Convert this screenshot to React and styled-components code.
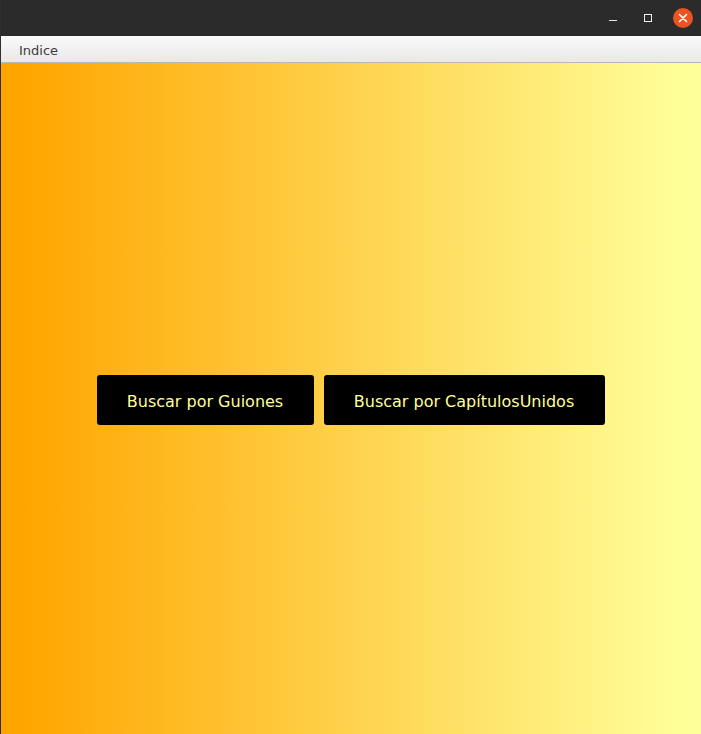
import React from 'react';
import styled, { createGlobalStyle } from 'styled-components';

const GlobalStyle = createGlobalStyle`
  html, body {
    margin: 0;
    padding: 0;
    height: 100%;
    overflow: hidden;
  }
  body {
    font-family: "DejaVu Sans", "Liberation Sans", sans-serif;
  }
  #root {
    height: 100%;
  }
`;

const Window = styled.div`
  width: 700px;
  height: 734px;
  border-left: 1px solid #2f2f2f;
  display: flex;
  flex-direction: column;
`;

const TitleBar = styled.div`
  height: 36px;
  background: #2b2b2b;
  display: flex;
  align-items: center;
  justify-content: flex-end;
  gap: 15px;
  padding-right: 8px;
  flex-shrink: 0;
`;

const WinButton = styled.button`
  width: 20px;
  height: 20px;
  padding: 0;
  border: none;
  background: ${({ $close }) => ($close ? '#e95420' : 'transparent')};
  border-radius: 50%;
  display: flex;
  align-items: center;
  justify-content: center;
`;

const MenuBar = styled.div`
  height: 24px;
  background: linear-gradient(to bottom, #fafafa, #e8e8e8);
  border-bottom: 1px solid #b8b8b8;
  display: flex;
  align-items: center;
  padding-left: 18px;
  padding-top: 2px;
  flex-shrink: 0;
`;

const MenuItem = styled.span`
  font-size: 13px;
  color: #3c3c3c;
`;

const Content = styled.div`
  flex: 1;
  background: linear-gradient(to right, #ffa500 0%, #ffa500 3%, #ffff99 97%, #ffff99 100%);
  display: flex;
  align-items: center;
  justify-content: center;
  gap: 10px;
  padding-top: 3px;
  padding-right: 1px;
`;

const ActionButton = styled.button`
  width: ${({ $w }) => $w}px;
  height: 50px;
  background: #000;
  border: none;
  border-radius: 3px;
  color: #ffff99;
  font-family: "DejaVu Sans", sans-serif;
  font-size: 16px;
  padding: 2px 0 0;
`;

export default function App() {
  return (
    <>
      <GlobalStyle />
      <Window>
        <TitleBar>
          <WinButton aria-label="minimize">
            <svg width="10" height="10" viewBox="0 0 10 10">
              <line x1="1" y1="7.5" x2="9" y2="7.5" stroke="#e6e6e6" strokeWidth="1" />
            </svg>
          </WinButton>
          <WinButton aria-label="maximize">
            <svg width="10" height="10" viewBox="0 0 10 10">
              <rect x="1.5" y="1.5" width="7" height="7" fill="none" stroke="#f0f0f0" strokeWidth="1" />
            </svg>
          </WinButton>
          <WinButton $close aria-label="close">
            <svg width="10" height="10" viewBox="0 0 10 10">
              <path d="M1.5 1.5 L8.5 8.5 M8.5 1.5 L1.5 8.5" stroke="#fff" strokeWidth="1.6" strokeLinecap="round" />
            </svg>
          </WinButton>
        </TitleBar>
        <MenuBar>
          <MenuItem>Indice</MenuItem>
        </MenuBar>
        <Content>
          <ActionButton $w={217}>Buscar por Guiones</ActionButton>
          <ActionButton $w={281}>Buscar por CapítulosUnidos</ActionButton>
        </Content>
      </Window>
    </>
  );
}
